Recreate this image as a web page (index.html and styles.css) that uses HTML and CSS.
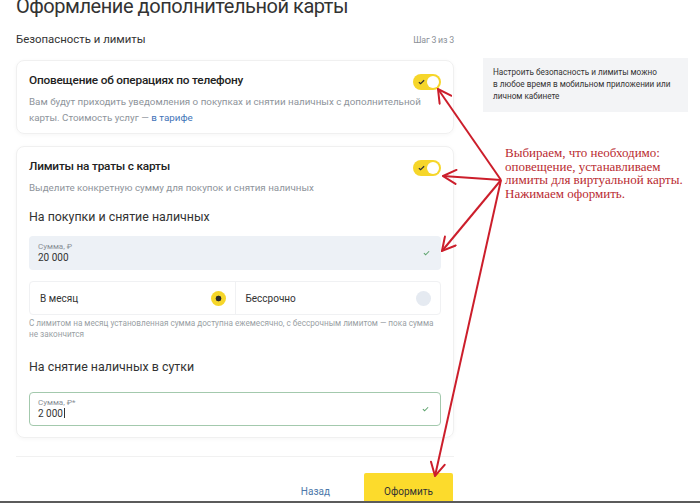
FILE: index.html
```html
<!DOCTYPE html>
<html lang="ru">
<head>
    <meta charset="UTF-8">
    <meta name="viewport" content="width=device-width, initial-scale=1.0">
    <title>Оформление дополнительной карты</title>
    <link rel="stylesheet" href="styles.css">
</head>
<body>
    <div class="screen">
        <main class="form">
            <h1 class="form-title">Оформление дополнительной карты</h1>

            <div class="step-head">
                <h2 class="step-name">Безопасность и лимиты</h2>
                <span class="step-count">Шаг 3 из 3</span>
            </div>

            <section class="option-card">
                <div class="option-head">
                    <h3 class="option-title">Оповещение об операциях по телефону</h3>
                    <span class="switch">
                        <svg class="switch-tick" viewBox="0 0 8 6"><path d="M1 3.2 L3 5 L7 1"/></svg>
                    </span>
                </div>
                <p class="option-text">Вам будут приходить уведомления о покупках и снятии наличных с дополнительной карты. Стоимость услуг — <a class="link" href="#">в тарифе</a></p>
            </section>

            <section class="option-card">
                <div class="option-head">
                    <h3 class="option-title">Лимиты на траты с карты</h3>
                    <span class="switch">
                        <svg class="switch-tick" viewBox="0 0 8 6"><path d="M1 3.2 L3 5 L7 1"/></svg>
                    </span>
                </div>
                <p class="option-text">Выделите конкретную сумму для покупок и снятия наличных</p>

                <h4 class="field-title">На покупки и снятие наличных</h4>
                <div class="amount amount-filled">
                    <div class="amount-body">
                        <span class="amount-label">Сумма, ₽</span>
                        <span class="amount-value">20 000</span>
                    </div>
                    <svg class="amount-ok" viewBox="0 0 8 6"><path d="M1 3.2 L3 5 L7 1"/></svg>
                </div>

                <div class="period">
                    <div class="period-item">
                        <span>В месяц</span>
                        <span class="radio radio-on"></span>
                    </div>
                    <div class="period-item">
                        <span>Бессрочно</span>
                        <span class="radio"></span>
                    </div>
                </div>
                <p class="hint">С лимитом на месяц установленная сумма доступна ежемесячно, с бессрочным лимитом — пока сумма не закончится</p>

                <h4 class="field-title field-title-gap">На снятие наличных в сутки</h4>
                <div class="amount amount-focus">
                    <div class="amount-body">
                        <span class="amount-label">Сумма, ₽*</span>
                        <span class="amount-value">2 000<i class="caret"></i></span>
                    </div>
                    <svg class="amount-ok" viewBox="0 0 8 6"><path d="M1 3.2 L3 5 L7 1"/></svg>
                </div>
            </section>

            <div class="actions">
                <a class="back" href="#">Назад</a>
                <button class="submit" type="button">Оформить</button>
            </div>
        </main>

        <aside class="side">
            <p class="side-note">Настроить безопасность и лимиты можно<br>в любое время в мобильном приложении или<br>личном кабинете</p>
            <p class="annotation">Выбираем, что необходимо: оповещение, устанавливаем лимиты для виртуальной карты. Нажимаем оформить.</p>
        </aside>

        <!-- пометки поверх формы -->
        <svg class="arrows" viewBox="0 0 700 503">
            <defs>
                <marker id="head" viewBox="0 0 16 16" refX="15" refY="8" markerWidth="16" markerHeight="16" markerUnits="userSpaceOnUse" orient="auto">
                    <path d="M2 1 L15 8 L2 15" fill="none" stroke="#cc1e2b" stroke-width="2" stroke-linecap="round"/>
                </marker>
            </defs>
            <g stroke="#cc1e2b" stroke-width="2" fill="none" marker-end="url(#head)">
                <path d="M501 180 L438 89"/>
                <path d="M501 180 L443 176"/>
                <path d="M501 180 L442 251"/>
                <path d="M501 180 L435 476"/>
            </g>
        </svg>
    </div>
</body>
</html>
```

FILE: styles.css
```css
* {
    margin: 0;
    padding: 0;
    box-sizing: border-box;
}

body {
    font-family: Roboto, 'Liberation Sans', Arial, sans-serif;
    background: #fff;
    color: #333;
}

.screen {
    position: relative;
    width: 700px;
    height: 503px;
    overflow: hidden;
    display: flex;
    gap: 29px;
    padding-left: 16px;
    border-bottom: 2px solid #5b5b5b;
}

.form {
    width: 438px;
    flex: none;
    display: flex;
    flex-direction: column;
}

.form-title {
    margin-top: -8px;
    font-size: 20px;
    line-height: 28px;
    font-weight: 400;
    letter-spacing: -0.45px;
    color: #333;
    white-space: nowrap;
}

.step-head {
    display: flex;
    justify-content: space-between;
    align-items: baseline;
    margin-top: 11px;
    line-height: 16px;
}

.step-name {
    font-size: 11.4px;
    font-weight: 400;
}

.step-count {
    font-size: 8.8px;
    letter-spacing: -0.2px;
    color: #8b9097;
}

.option-card {
    margin-top: 12px;
    padding: 11px 12px 7px;
    border: 1px solid #f0f0f0;
    border-radius: 8px;
    box-shadow: 0 1px 4px rgba(0, 0, 0, 0.04);
}

.option-card + .option-card {
    padding-bottom: 11px;
}

.option-head {
    display: flex;
    justify-content: space-between;
    align-items: center;
    height: 16px;
}

.option-title {
    font-size: 11.8px;
    line-height: 16px;
    font-weight: 500;
    letter-spacing: -0.2px;
    color: #222;
}

/* переключатель в положении «вкл» */
.switch {
    position: relative;
    width: 28px;
    height: 16px;
    margin-top: 3px;
    border-radius: 8px;
    background: #f6d62a;
    flex: none;
}

.switch::after {
    content: '';
    position: absolute;
    top: 2px;
    right: 2px;
    width: 12px;
    height: 12px;
    border-radius: 50%;
    background: #fff;
}

.switch-tick {
    position: absolute;
    top: 5px;
    left: 5px;
    width: 7px;
    height: 6px;
    fill: none;
    stroke: #333;
    stroke-width: 1.4;
}

.option-text {
    margin-top: 6px;
    font-size: 9.8px;
    line-height: 16px;
    color: #8e949b;
}

.link {
    color: #3f74b8;
    text-decoration: none;
}

.field-title {
    margin-top: 13px;
    font-size: 12.4px;
    line-height: 16px;
    font-weight: 400;
    color: #333;
}

.field-title-gap {
    margin-top: 19px;
}

.amount {
    display: flex;
    align-items: center;
    justify-content: space-between;
    height: 34px;
    margin-top: 11px;
    padding: 0 11px 0 9px;
    border-radius: 4px;
}

.amount-filled {
    background: #edf1f6;
}

.amount-focus {
    margin-top: 17px;
    border: 1px solid #a3c9ad;
    padding-left: 8px;
}

.amount-body {
    display: flex;
    flex-direction: column;
}

.amount-label {
    font-size: 8px;
    line-height: 10px;
    color: #8a9097;
}

.amount-value {
    font-size: 10px;
    line-height: 12px;
    color: #333;
}

.caret {
    display: inline-block;
    width: 1px;
    height: 10px;
    margin-left: 1px;
    vertical-align: -1px;
    background: #333;
}

.amount-ok {
    width: 7px;
    height: 6px;
    fill: none;
    stroke: #5ea46e;
    stroke-width: 1.2;
}

.period {
    display: flex;
    height: 34px;
    margin-top: 11px;
    border: 1px solid #f0f1f3;
    border-radius: 4px;
}

.period-item {
    flex: 1;
    display: flex;
    align-items: center;
    justify-content: space-between;
    padding: 0 9px 0 10px;
    font-size: 10px;
    color: #333;
}

.period-item + .period-item {
    border-left: 1px solid #f0f1f3;
}

.radio {
    width: 15px;
    height: 15px;
    border-radius: 50%;
    background: #e5eaf1;
}

.radio-on {
    background: radial-gradient(circle, #2b2b2b 0 2.6px, #f6d62a 3.2px);
}

.hint {
    margin-top: 3px;
    font-size: 8.2px;
    line-height: 11px;
    color: #9a9fa5;
}

.actions {
    display: flex;
    justify-content: flex-end;
    align-items: center;
    gap: 34px;
    margin-top: 18px;
    padding-top: 16px;
    border-top: 1px solid #f1f1f1;
}

.back {
    font-size: 10px;
    color: #4d78aa;
    text-decoration: none;
}

.submit {
    width: 89px;
    height: 36px;
    margin-right: 1px;
    border: none;
    border-radius: 2px;
    background: #fcdb2c;
    font-family: inherit;
    font-size: 10px;
    color: #333;
}

.side {
    width: 205px;
    flex: none;
    display: flex;
    flex-direction: column;
    padding-top: 58px;
}

.side-note {
    padding: 8px 10px 10px;
    background: #f3f4f6;
    font-size: 8.2px;
    line-height: 12px;
    color: #333;
}

.annotation {
    margin: 34px 0 0 22px;
    font-family: 'Liberation Serif', 'Times New Roman', serif;
    font-size: 13px;
    line-height: 13.5px;
    color: #b92a30;
}

.arrows {
    position: absolute;
    top: 0;
    left: 0;
    width: 700px;
    height: 503px;
    pointer-events: none;
}
```
